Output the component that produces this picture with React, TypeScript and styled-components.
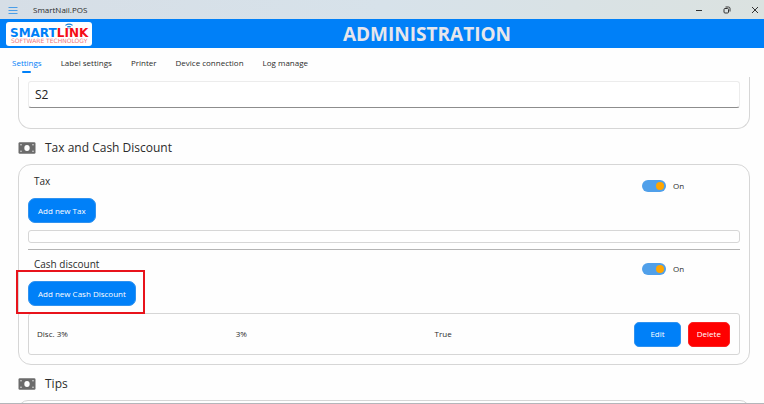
import React, { useState } from "react";
import styled, { createGlobalStyle } from "styled-components";

const GlobalStyle = createGlobalStyle`
  * { box-sizing: border-box; }
  html, body { margin: 0; background: #fff; }
  body, button, input { font-family: "Open Sans", "Noto Sans", sans-serif; }
`;

const blue = "#0080f8";

const Shell = styled.div`
  display: flex;
  flex-direction: column;
  height: 100vh;
  overflow: hidden;
  background: #fefefe;
  border-bottom: 1px solid #b4b6ba;
  color: #2b2b2b;
`;

const TitleBar = styled.header`
  display: flex;
  flex: none;
  align-items: center;
  height: 19px;
  padding: 0 4px 0 7px;
  background: linear-gradient(90deg, #d6dee6, #d7e2ea 50%, #dbe2e0);
`;

const IconButton = styled.button`
  display: flex;
  align-items: center;
  justify-content: center;
  width: 11px;
  height: 11px;
  padding: 0;
  border: 0;
  background: none;
  color: #333;
`;

const AppName = styled.span`
  flex: 1;
  margin-left: 15px;
  font-size: 8px;
  line-height: 12px;
`;

const WindowControls = styled.div`
  display: flex;
  gap: 17px;
`;

const Banner = styled.div`
  display: grid;
  grid-template-columns: 90px 1fr;
  flex: none;
  align-items: center;
  height: 29px;
  padding-left: 6px;
  background: ${blue};
`;

const Logo = styled.svg`
  display: block;
  width: 86px;
  height: 24px;
`;

const Heading = styled.h1`
  margin: 0;
  padding-right: 6px;
  color: #e6e6ec;
  font-size: 19px;
  line-height: 24px;
  font-weight: 700;
  text-align: center;
`;

const Tabs = styled.nav`
  display: flex;
  flex: none;
  gap: 19px;
  height: 29px;
  padding: 9px 12px 0;
`;

const Tab = styled.a<{ $active?: boolean }>`
  display: flex;
  flex-direction: column;
  align-items: center;
  gap: 2px;
  color: ${(p) => (p.$active ? blue : "#2b2b2b")};
  font-size: 8px;
  line-height: 12px;
  text-decoration: none;

  &::after {
    content: "";
    width: 9px;
    height: 2px;
    border-radius: 1px;
    background: ${(p) => (p.$active ? blue : "transparent")};
  }
`;

const Content = styled.main`
  flex: 1;
  min-height: 0;
  padding: 0 14px 0 18px;
  overflow: hidden;
`;

const Card = styled.section<{ $continued?: boolean }>`
  padding: ${(p) => (p.$continued ? "4px 9px 20px" : "9px")};
  border: 1px solid #d6d6d6;
  border-top-width: ${(p) => (p.$continued ? "0" : "1px")};
  border-radius: ${(p) => (p.$continued ? "0 0 13px 13px" : "13px")};
`;

const TextField = styled.input`
  display: block;
  width: 100%;
  height: 27px;
  padding: 0 6px;
  border: 1px solid #ececec;
  border-bottom-color: #8d8d8d;
  border-radius: 3px;
  background: #fff;
  color: #222;
  font-size: 12px;
  outline: none;
`;

const SectionTitle = styled.h2`
  display: flex;
  align-items: center;
  gap: 9px;
  height: 35px;
  margin: 0;
  padding-top: 2px;
  font-size: 12px;
  line-height: 18px;
  font-weight: 400;
`;

const Group = styled.div`
  & + & {
    margin-top: 6px;
    padding-top: 7px;
    border-top: 1px solid #b4b4b4;
  }
`;

const GroupHeader = styled.div`
  display: grid;
  grid-template-columns: 1fr 98px;
  height: 24px;
  padding-left: 6px;
`;

const GroupName = styled.h3`
  margin: 0;
  font-size: 10px;
  line-height: 14px;
  font-weight: 400;
`;

const ToggleLabel = styled.label`
  display: flex;
  align-items: center;
  gap: 7px;
  height: 23px;
  font-size: 8px;
  line-height: 12px;
`;

const Toggle = styled.input`
  display: flex;
  align-items: center;
  width: 24px;
  height: 12px;
  margin: 0;
  padding: 0 2px;
  appearance: none;
  border-radius: 6px;
  background: #b5b5b5;

  &::before {
    content: "";
    width: 8px;
    height: 8px;
    border-radius: 50%;
    background: #fff;
  }

  &:checked {
    justify-content: flex-end;
    background: #50a0ea;
  }

  &:checked::before {
    background: #ffa500;
  }
`;

const Button = styled.button<{ $danger?: boolean; $compact?: boolean }>`
  height: 25px;
  padding: ${(p) => (p.$compact ? "0" : "0 9px")};
  border: 1px solid ${(p) => (p.$danger ? "#fb2020" : "#2f92f0")};
  border-radius: ${(p) => (p.$compact ? "5px" : "7px")};
  background: ${(p) => (p.$danger ? "#ff0000" : blue)};
  color: #fff;
  font-size: 8px;
  line-height: 12px;
`;

const ButtonSlot = styled.div`
  position: relative;
  display: flex;
  width: fit-content;
`;

const Highlight = styled.span`
  position: absolute;
  inset: -11px -9px -8px -12px;
  border: 2px solid #e8131b;
  pointer-events: none;
`;

const EmptyList = styled.div`
  height: 13px;
  margin-top: 7px;
  border: 1px solid #d6d6d6;
  border-radius: 3px;
`;

const ListFrame = styled.div`
  margin-top: 7px;
  border: 1px solid #d6d6d6;
  border-radius: 3px;
`;

const Table = styled.table`
  width: 100%;
  table-layout: fixed;
  border-collapse: collapse;
  font-size: 8px;
  line-height: 12px;
`;

const Cell = styled.td`
  width: 28%;
  height: 40px;
  padding: 0 0 0 8px;
`;

const ActionCell = styled.td`
  padding: 0 9px;
`;

const Actions = styled.div`
  display: grid;
  grid-template-columns: 47fr 43fr;
  gap: 7px;
`;

function BrandLogo() {
  return (
    <Logo viewBox="0 0 86 24" role="img" aria-label="SmartLink Software Technology">
      <rect width="86" height="24" rx="3" fill="#fff" />
      <g fill="none" stroke="#1680d8">
        <path d="M59.4 3.4q3.6-2.6 7.2 0" strokeWidth="1.1" />
        <path d="M61 5q2-1.4 4 0" strokeWidth="1" />
      </g>
      <circle cx="63" cy="6" r="0.7" fill="#1680d8" />
      <g fontFamily="DejaVu Sans, sans-serif">
        <text x="4" y="15" fontSize="12" fontWeight="700" fill={blue}>
          SMART<tspan fill="#f50c16">LINK</tspan>
        </text>
        <text x="5" y="21" fontSize="6" fill="#f2767a">SOFTWARE TECHNOLOGY</text>
      </g>
    </Logo>
  );
}

function MoneyIcon() {
  return (
    <svg width="18" height="12" viewBox="0 0 18 12" aria-hidden="true">
      <rect x="0.5" y="0.3" width="17" height="11.4" rx="1.3" fill="#6b6b6b" />
      <ellipse cx="9" cy="6" rx="2.7" ry="2.9" fill="#fff" />
      <g fill="#dedede">
        <circle cx="3" cy="2.7" r="0.8" />
        <circle cx="15" cy="2.7" r="0.8" />
        <circle cx="3" cy="9.3" r="0.8" />
        <circle cx="15" cy="9.3" r="0.8" />
      </g>
    </svg>
  );
}

function Switch({ name }: { name: string }) {
  const [on, setOn] = useState(true);
  return (
    <ToggleLabel>
      <Toggle type="checkbox" role="switch" name={name} checked={on} onChange={() => setOn(!on)} />
      {on ? "On" : "Off"}
    </ToggleLabel>
  );
}

const tabs = ["Settings", "Label settings", "Printer", "Device connection", "Log manage"];
const discounts = [{ name: "Disc. 3%", rate: "3%", enabled: "True" }];

export default function App() {
  return (
    <Shell>
      <GlobalStyle />
      <TitleBar>
        <IconButton aria-label="Menu">
          <svg width="10" height="8" viewBox="0 0 10 8" stroke="#4a9ee8" strokeWidth="1">
            <path d="M0.5 1.5h9M0.5 4.5h9M0.5 7.5h9" />
          </svg>
        </IconButton>
        <AppName>SmartNail.POS</AppName>
        <WindowControls>
          <IconButton aria-label="Minimize">
            <svg width="8" height="8" viewBox="0 0 8 8" stroke="currentColor">
              <path d="M1 4.5h6" />
            </svg>
          </IconButton>
          <IconButton aria-label="Restore">
            <svg width="8" height="8" viewBox="0 0 8 8" fill="none" stroke="currentColor">
              <rect x="1" y="2.5" width="4.5" height="4.5" rx="1" />
              <path d="M2.5 1h3a1.5 1.5 0 0 1 1.5 1.5v3" />
            </svg>
          </IconButton>
          <IconButton aria-label="Close">
            <svg width="8" height="8" viewBox="0 0 8 8" stroke="currentColor">
              <path d="M1 1l6 6M7 1l-6 6" />
            </svg>
          </IconButton>
        </WindowControls>
      </TitleBar>
      <Banner>
        <BrandLogo />
        <Heading>ADMINISTRATION</Heading>
      </Banner>
      <Tabs>
        {tabs.map((tab, i) => (
          <Tab key={tab} href="#" $active={i === 0}>
            {tab}
          </Tab>
        ))}
      </Tabs>
      <Content>
        <Card $continued>
          <TextField aria-label="Station" defaultValue="S2" />
        </Card>
        <SectionTitle>
          <MoneyIcon />
          Tax and Cash Discount
        </SectionTitle>
        <Card>
          <Group>
            <GroupHeader>
              <GroupName>Tax</GroupName>
              <Switch name="tax" />
            </GroupHeader>
            <ButtonSlot>
              <Button>Add new Tax</Button>
            </ButtonSlot>
            <EmptyList />
          </Group>
          <Group>
            <GroupHeader>
              <GroupName>Cash discount</GroupName>
              <Switch name="cash-discount" />
            </GroupHeader>
            <ButtonSlot>
              <Button>Add new Cash Discount</Button>
              <Highlight />
            </ButtonSlot>
            <ListFrame>
              <Table>
                <tbody>
                  {discounts.map((d) => (
                    <tr key={d.name}>
                      <Cell>{d.name}</Cell>
                      <Cell>{d.rate}</Cell>
                      <Cell>{d.enabled}</Cell>
                      <ActionCell>
                        <Actions>
                          <Button $compact>Edit</Button>
                          <Button $compact $danger>
                            Delete
                          </Button>
                        </Actions>
                      </ActionCell>
                    </tr>
                  ))}
                </tbody>
              </Table>
            </ListFrame>
          </Group>
        </Card>
        <SectionTitle>
          <MoneyIcon />
          Tips
        </SectionTitle>
        <Card />
      </Content>
    </Shell>
  );
}
